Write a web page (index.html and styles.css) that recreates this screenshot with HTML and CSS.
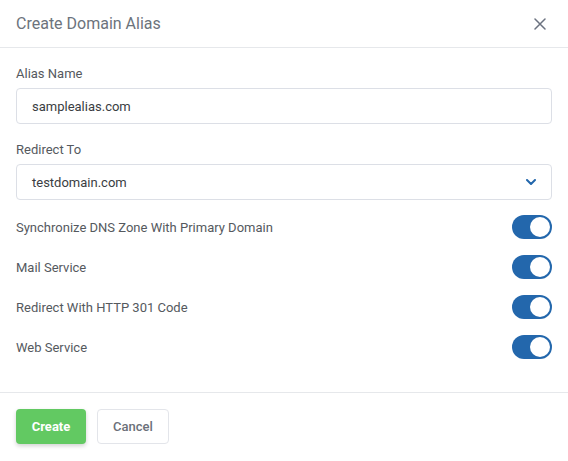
FILE: index.html
```html
<!DOCTYPE html>
<html>
<head>
<meta charset="utf-8">
<link rel="stylesheet" href="styles.css">
</head>
<body>
<div class="modal">
  <div class="modal-header">
    <div class="modal-title">Create Domain Alias</div>
    <button class="close-btn" aria-label="Close">
      <svg width="12" height="12" viewBox="0 0 12 12"><path d="M1 1L11 11M11 1L1 11" stroke="#6b7280" stroke-width="1.5" stroke-linecap="round" fill="none"/></svg>
    </button>
  </div>
  <div class="modal-body">
    <div class="field">
      <label class="field-label">Alias Name</label>
      <div class="input">samplealias.com</div>
    </div>
    <div class="field">
      <label class="field-label">Redirect To</label>
      <div class="input select">
        <span>testdomain.com</span>
        <svg class="chevron" width="10" height="6" viewBox="0 0 10 6"><path d="M1 1L5 5L9 1" stroke="#2367ac" stroke-width="2" fill="none" stroke-linecap="round" stroke-linejoin="round"/></svg>
      </div>
    </div>
    <div class="toggles">
      <div class="toggle-row"><span>Synchronize DNS Zone With Primary Domain</span><span class="switch"><span class="knob"></span></span></div>
      <div class="toggle-row"><span>Mail Service</span><span class="switch"><span class="knob"></span></span></div>
      <div class="toggle-row"><span>Redirect With HTTP 301 Code</span><span class="switch"><span class="knob"></span></span></div>
      <div class="toggle-row"><span>Web Service</span><span class="switch"><span class="knob"></span></span></div>
    </div>
  </div>
  <div class="modal-footer">
    <button class="btn btn-primary">Create</button>
    <button class="btn btn-default">Cancel</button>
  </div>
</div>
</body>
</html>
```
FILE: styles.css
```css
html, body {
  margin: 0;
  padding: 0;
  background: #fff;
}
body {
  font-family: Roboto, "Liberation Sans", sans-serif;
}
.modal {
  width: 568px;
  height: 461px;
  background: #fff;
  display: flex;
  flex-direction: column;
}
.modal-header {
  height: 47px;
  border-bottom: 1px solid #e6e8eb;
  display: flex;
  align-items: center;
  justify-content: space-between;
  padding: 0 16px;
}
.modal-title {
  font-size: 16px;
  color: #6c737c;
  line-height: 19px;
}
.close-btn {
  border: 0;
  background: none;
  padding: 0;
  margin-right: 6px;
  width: 12px;
  height: 12px;
  display: flex;
}
.modal-body {
  padding: 18px 16px 33px;
  display: flex;
  flex-direction: column;
  gap: 18px;
  border-bottom: 1px solid #e6e8eb;
}
.field {
  display: flex;
  flex-direction: column;
  gap: 7px;
}
.field-label {
  font-size: 13px;
  line-height: 15px;
  color: #55595e;
}
.input {
  height: 36px;
  box-sizing: border-box;
  border: 1px solid #dcdfe6;
  border-radius: 4px;
  padding: 0 15px;
  font-size: 13px;
  color: #3a3d42;
  display: flex;
  align-items: center;
}
.select {
  justify-content: space-between;
}
.toggles {
  display: flex;
  flex-direction: column;
  gap: 16px;
  margin-top: -3px;
}
.toggle-row {
  display: flex;
  align-items: center;
  justify-content: space-between;
  height: 24px;
  font-size: 13px;
  color: #55595e;
}
.switch {
  width: 40px;
  height: 24px;
  border-radius: 12px;
  background: #2367ac;
  box-sizing: border-box;
  padding: 2px;
  display: flex;
  justify-content: flex-end;
}
.knob {
  width: 20px;
  height: 20px;
  border-radius: 50%;
  background: #fff;
}
.modal-footer {
  padding: 16px;
  display: flex;
  gap: 11px;
}
.btn {
  height: 35px;
  box-sizing: border-box;
  border-radius: 4px;
  font-family: Roboto, "Liberation Sans", sans-serif;
  font-size: 13px;
  padding: 0 15px;
  cursor: pointer;
}
.btn-primary {
  width: 70px;
  background: #62c962;
  border: 0;
  color: #fff;
  font-weight: 700;
  box-shadow: 0 2px 4px rgba(0,0,0,0.18);
}
.btn-default {
  width: 72px;
  background: #fff;
  border: 1px solid #e3e5ea;
  color: #6b7079;
  font-weight: 500;
}
```
